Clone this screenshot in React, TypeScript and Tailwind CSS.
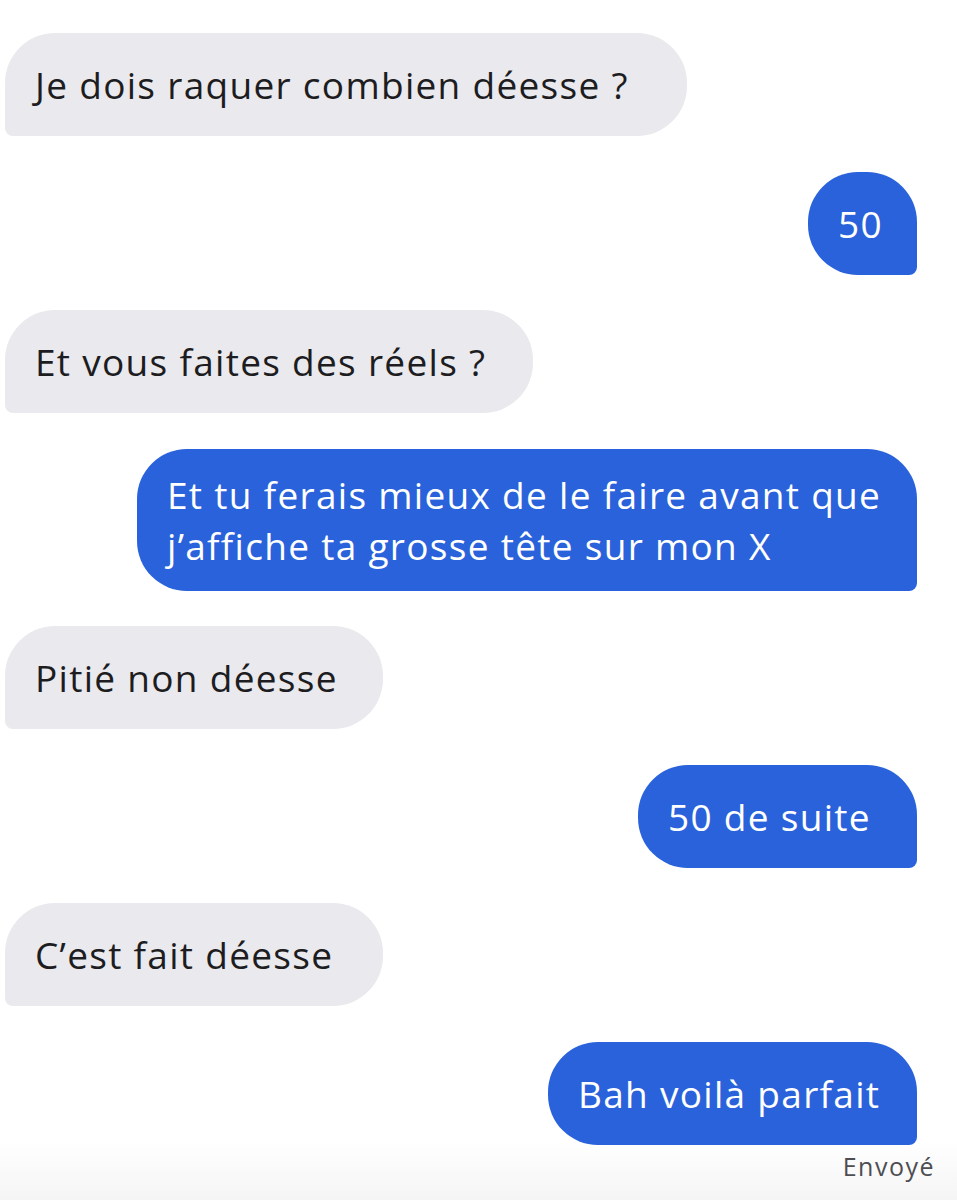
const messages = [
  { from: "them", lines: ["Je dois raquer combien déesse ?"], w: "w-[682px]" },
  { from: "me", lines: ["50"], w: "w-[109px]" },
  { from: "them", lines: ["Et vous faites des réels ?"], w: "w-[528px]" },
  {
    from: "me",
    lines: ["Et tu ferais mieux de le faire avant que", "j’affiche ta grosse tête sur mon X"],
    w: "w-[780px]",
  },
  { from: "them", lines: ["Pitié non déesse"], w: "w-[378px]" },
  { from: "me", lines: ["50 de suite"], w: "w-[279px]" },
  { from: "them", lines: ["C’est fait déesse"], w: "w-[378px]" },
  { from: "me", lines: ["Bah voilà parfait"], w: "w-[369px]" },
];

export default function App() {
  return (
    <div
      className="relative w-[957px] h-[1200px] overflow-hidden bg-gradient-to-b from-white from-[95%] to-[#f5f5f6]"
      style={{ fontFamily: "'Open Sans', Lato, sans-serif" }}
    >
      <div className="flex flex-col gap-[35.5px] pt-[33px] pl-[5px] pr-[40px]">
        {messages.map((m, i) => {
          const mine = m.from === "me";
          const multi = m.lines.length > 1;
          return (
            <div
              key={i}
              className={`${m.w} ${
                mine
                  ? "self-end bg-[#2962da] text-white rounded-[50px] rounded-br-[8px]"
                  : "self-start bg-[#e9e9ee] text-[#1d1d21] rounded-[50px] rounded-bl-[8px]"
              } ${multi ? "py-[20px]" : "py-[26px]"} pl-[30px] text-[37px] leading-[51px] tracking-[1.3px] whitespace-nowrap`}
            >
              {m.lines.map((l, j) => (
                <div key={j}>{l}</div>
              ))}
            </div>
          );
        })}
      </div>
      <div className="pr-[22px] pt-[4px] text-right text-[25px] leading-[34px] tracking-[1.5px] text-[#4d4d52]">
        Envoyé
      </div>
    </div>
  );
}
